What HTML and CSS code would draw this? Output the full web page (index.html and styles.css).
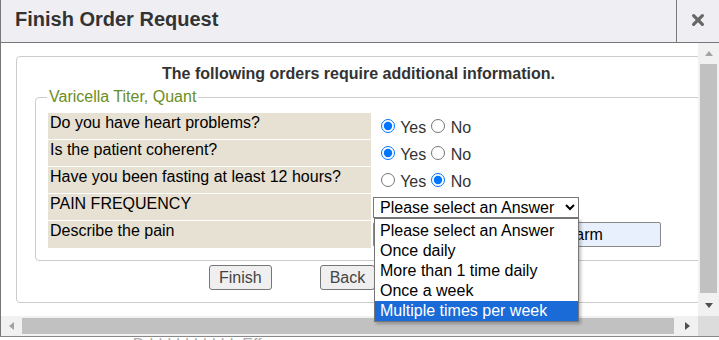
FILE: index.html
```html
<!DOCTYPE html>
<html lang="en">
<head>
    <meta charset="UTF-8">
    <meta name="viewport" content="width=device-width, initial-scale=1.0">
    <title>Finish Order Request</title>
    <link rel="stylesheet" href="styles.css">
</head>
<body>
    <div class="dialog">
        <div class="titlebar">
            <span class="title">Finish Order Request</span>
            <span class="close">
                <svg width="14" height="14" viewBox="0 0 14 14"><path d="M2.6 2.6l8.8 8.8M11.4 2.6l-8.8 8.8" stroke="#666" stroke-width="3.2" stroke-linecap="round"/></svg>
            </span>
        </div>

        <div class="pane">
            <div class="viewport">
                <div class="orders">
                    <p class="intro">The following orders require additional information.</p>

                    <fieldset class="order">
                        <legend>Varicella Titer, Quant</legend>
                        <table class="questions">
                            <tr>
                                <td class="q">Do you have heart problems?</td>
                                <td class="a"><input type="radio" name="q1" checked> Yes<input type="radio" name="q1"> No</td>
                            </tr>
                            <tr>
                                <td class="q">Is the patient coherent?</td>
                                <td class="a"><input type="radio" name="q2" checked> Yes<input type="radio" name="q2"> No</td>
                            </tr>
                            <tr>
                                <td class="q">Have you been fasting at least 12 hours?</td>
                                <td class="a"><input type="radio" name="q3"> Yes<input type="radio" name="q3" checked> No</td>
                            </tr>
                            <tr>
                                <td class="q">PAIN FREQUENCY</td>
                                <td class="a">
                                    <div class="pick-wrap">
                                        <select class="pick">
                                            <option>Please select an Answer</option>
                                            <option>Once daily</option>
                                            <option>More than 1 time daily</option>
                                            <option>Once a week</option>
                                            <option>Multiple times per week</option>
                                        </select>
                                        <!-- open list of the select above -->
                                        <ul class="dropdown">
                                            <li>Please select an Answer</li>
                                            <li>Once daily</li>
                                            <li>More than 1 time daily</li>
                                            <li>Once a week</li>
                                            <li class="hl">Multiple times per week</li>
                                        </ul>
                                    </div>
                                </td>
                            </tr>
                            <tr class="tall">
                                <td class="q">Describe the pain</td>
                                <td class="a"><input type="text" class="desc" value="Sharp pain radiating to left arm"></td>
                            </tr>
                        </table>
                    </fieldset>

                    <div class="actions">
                        <button class="btn">Finish</button>
                        <button class="btn">Back</button>
                    </div>
                </div>
            </div>

            <div class="vscroll">
                <span class="step"><span class="tri up off"></span></span>
                <span class="thumb"></span>
                <span class="step"><span class="tri down"></span></span>
            </div>
            <div class="hscroll">
                <span class="step"><span class="tri left off"></span></span>
                <span class="thumb"></span>
                <span class="step"><span class="tri right"></span></span>
            </div>
            <div class="corner"></div>
        </div>
    </div>

    <p class="behind">o&nbsp;&nbsp;Ddddddddddd&nbsp;&nbsp;Eff</p>
</body>
</html>
```

FILE: styles.css
```css
html, body {
    margin: 0;
}
body {
    font-family: "Liberation Sans", Arial, sans-serif;
    font-size: 16px;
    color: #333;
    background: #fff;
    overflow: hidden;
}

/* dialog frame */
.dialog {
    width: 718px;
    border-left: 1px solid #777;
    border-bottom: 1px solid #888;
    background: #fff;
}
.titlebar {
    display: flex;
    height: 42px;
    background: #efeff3;
    border-bottom: 1px solid #777;
}
.title {
    flex: 1;
    padding: 8px 14px 0;
    font-size: 20px;
    font-weight: bold;
    line-height: 23px;
    color: #333;
}
.close {
    width: 43px;
    border-left: 1px solid #777;
    display: flex;
    align-items: center;
    justify-content: center;
    padding-bottom: 2px;
    box-sizing: border-box;
}

.pane {
    display: grid;
    grid-template-columns: 697px 21px;
    grid-template-rows: 273px 20px;
}
.viewport {
    overflow-x: clip;
    min-width: 0;
}

/* content */
.orders {
    width: 685px;
    box-sizing: border-box;
    margin: 13px 0 0 15px;
    padding: 8px 0 12px;
    border: 1px solid #ccc;
    border-radius: 4px;
}
.intro {
    margin: 0;
    text-align: center;
    font-weight: bold;
    line-height: 18px;
    color: #333;
}
.order {
    margin: 5px -12px 0 18px;
    padding: 6px 10px 11px;
    border: 1px solid #ccc;
    border-radius: 4px;
}
.order legend {
    margin-left: 1px;
    padding: 0 2px;
    line-height: 18px;
    color: #6a8e22;
}
.questions {
    border-spacing: 2px 1px;
}
.questions tr {
    height: 26px;
}
.questions tr.tall {
    height: 27px;
}
.q {
    width: 319px;
    padding: 1px 2px;
    vertical-align: top;
    background: #e7e1d3;
    color: #000;
    line-height: 18px;
}
.a {
    padding: 0;
    vertical-align: middle;
    color: #333;
}
.a input[type="radio"] {
    width: 14px;
    height: 14px;
    margin: 3px 1px 0 8px;
}
.a input[type="radio"] ~ input[type="radio"] {
    margin-left: 5px;
}

.pick-wrap {
    position: relative;
    display: flex;
}
.pick {
    width: 206px;
    height: 21px;
    margin: 0;
    padding: 0 0 0 2px;
    font-family: "Liberation Sans", Arial, sans-serif;
    font-size: 16px;
    color: #000;
    background: #fff;
    border: 1px solid #767676;
    border-radius: 0;
}
.dropdown {
    position: absolute;
    top: 100%;
    left: 1px;
    z-index: 3;
    width: 205px;
    box-sizing: border-box;
    margin: 0;
    padding: 2px 0 0;
    list-style: none;
    background: #fff;
    border: 1px solid #767676;
    box-shadow: 2px 2px 3px rgba(0, 0, 0, 0.25);
}
.dropdown li {
    height: 20px;
    line-height: 20px;
    padding: 0 5px;
    color: #000;
    white-space: nowrap;
}
.dropdown li.hl {
    background: #1a6bd8;
    color: #fff;
}

.desc {
    display: block;
    width: 288px;
    height: 25px;
    box-sizing: border-box;
    margin: 0;
    padding: 0 2px 0 10px;
    font-family: "Liberation Sans", Arial, sans-serif;
    font-size: 16px;
    color: #000;
    background: #e8f0fe;
    border: 1px solid #8a8a8a;
    border-radius: 2px;
}

.actions {
    display: flex;
    gap: 48px;
    margin-top: 4px;
    padding-left: 192px;
}
.btn {
    height: 25px;
    padding: 0 9px;
    font-family: "Liberation Sans", Arial, sans-serif;
    font-size: 16px;
    color: #444;
    background: #efefef;
    border: 1px solid #767676;
    border-radius: 3px;
}

/* scrollbars */
.vscroll, .hscroll {
    display: flex;
    background: #f1f1f1;
}
.vscroll {
    flex-direction: column;
}
.step {
    display: flex;
    align-items: center;
    justify-content: center;
    flex: 0 0 21px;
}
.vscroll .thumb {
    height: 229px;
    margin: 0 2px 2px;
    background: #c1c1c1;
}
.hscroll .thumb {
    width: 652px;
    margin: 2px 3px 2px 0;
    background: #c1c1c1;
}
.corner {
    background: #dcdcdc;
}
.tri {
    width: 0;
    height: 0;
    border: 0 solid transparent;
}
.tri.up {
    border-width: 0 4.5px 5px;
    border-bottom-color: #505050;
}
.tri.down {
    border-width: 5px 4.5px 0;
    border-top-color: #505050;
}
.tri.left {
    border-width: 4.5px 5px 4.5px 0;
    border-right-color: #505050;
}
.tri.right {
    border-width: 4.5px 0 4.5px 5px;
    border-left-color: #505050;
}
.tri.up.off {
    border-bottom-color: #a3a3a3;
}
.tri.left.off {
    border-right-color: #a3a3a3;
}

/* page behind the dialog */
.behind {
    margin: -1px 0 0 115px;
    line-height: 18px;
    color: #aaa;
}
```
